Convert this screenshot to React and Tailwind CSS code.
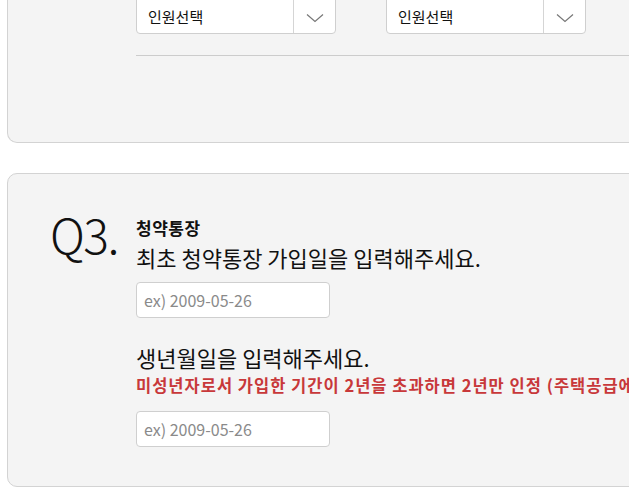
import React from "react";

const font = { fontFamily: '"Noto Sans CJK KR", "Noto Sans", sans-serif' };

function Chevron() {
  return (
    <svg width="18" height="10" viewBox="0 0 18 10" fill="none">
      <path d="M1 1.5 L9 8.5 L17 1.5" stroke="#777" strokeWidth="1.2" />
    </svg>
  );
}

function Select() {
  return (
    <div className="flex h-[41px] w-[200px] items-stretch rounded-[4px] border border-[#cfcfcf] bg-white">
      <div className="flex flex-1 items-center pl-[11px] pt-[8px] text-[15px] text-[#111]">인원선택</div>
      <div className="flex w-[42px] items-center justify-center border-l border-[#d5d5d5] pt-[8px]">
        <Chevron />
      </div>
    </div>
  );
}

function DateInput() {
  return (
    <div className="flex h-[36px] w-[194px] items-center rounded-[4px] border border-[#cfcfcf] bg-white pl-[7px] text-[16px] text-[#8a8a8a]">
      ex) 2009-05-26
    </div>
  );
}

export default function App() {
  return (
    <div className="h-[493px] w-[629px] overflow-hidden bg-white" style={font}>
      <div className="ml-[7px] -mt-[20px] w-[720px] rounded-b-[10px] border-x border-b border-[#d3d3d3] bg-[#f4f4f4] pb-[86px] pt-[13px]">
        <div className="flex gap-[50px] pl-[128px]">
          <Select />
          <Select />
        </div>
        <div className="ml-[128px] mt-[21px] h-px bg-[#cccccc]" />
      </div>

      <div className="ml-[7px] mt-[30px] flex w-[720px] rounded-[10px] border border-[#d3d3d3] bg-[#f4f4f4] pb-[39px] pl-[42px] pt-[43px]">
        <div className="-mt-[8px] w-[86px] text-[48px] font-light leading-[48px] tracking-[-1.5px] text-[#111]">Q3.</div>
        <div className="flex flex-col">
          <div className="text-[17px] font-bold leading-[22px] tracking-[0.5px] text-[#111]">청약통장</div>
          <div className="mt-[3px] text-[22px] leading-[30px] text-[#111]">최초 청약통장 가입일을 입력해주세요.</div>
          <div className="mt-[10px]">
            <DateInput />
          </div>
          <div className="mt-[24px] text-[22px] leading-[30px] text-[#111]">생년월일을 입력해주세요.</div>
          <div className="whitespace-nowrap text-[16.5px] font-semibold leading-[26px] tracking-[1px] text-[#c8383a]">
            미성년자로서 가입한 기간이 2년을 초과하면 2년만 인정 (주택공급에 관한 규칙)
          </div>
          <div className="mt-[13px]">
            <DateInput />
          </div>
        </div>
      </div>
    </div>
  );
}
